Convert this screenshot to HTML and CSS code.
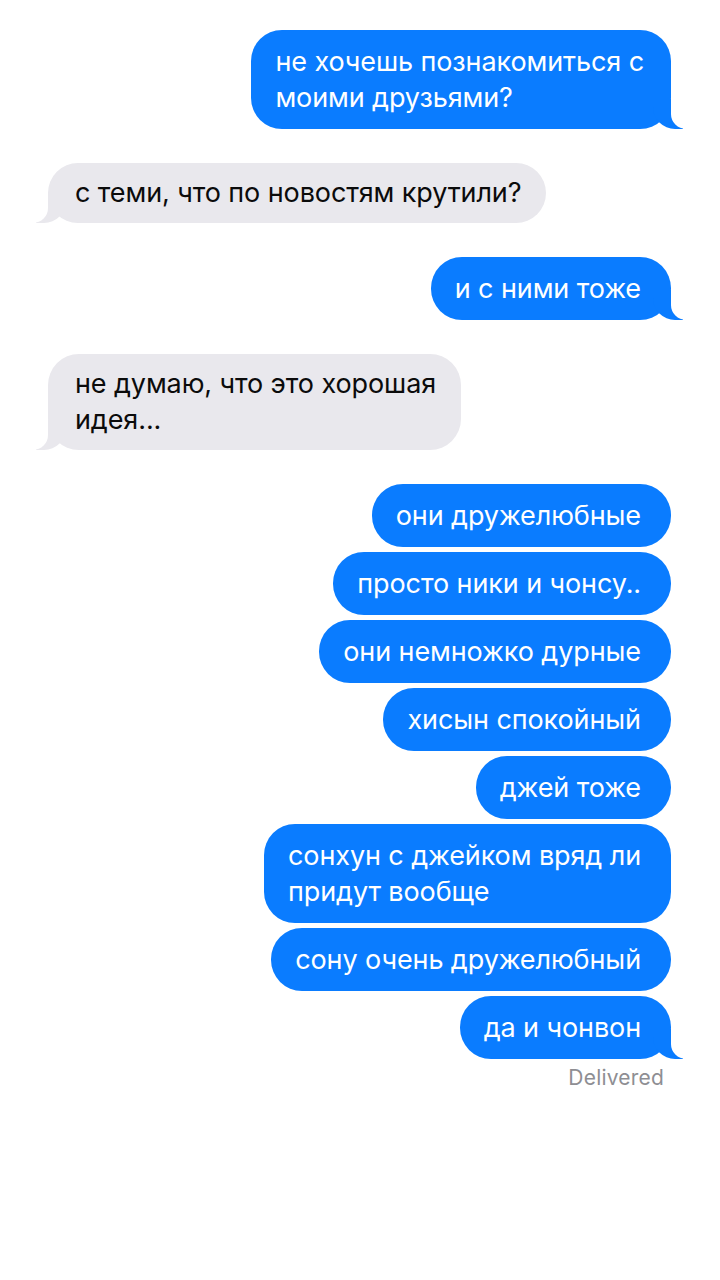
FILE: index.html
```html
<!DOCTYPE html>
<html lang="ru">
<head>
<meta charset="utf-8">
<link rel="stylesheet" href="styles.css">
</head>
<body>
<main class="chat">
  <div class="row sent"><div class="bubble sent tail first">не хочешь познакомиться с<br>моими друзьями?</div></div>
  <div class="row recv"><div class="bubble recv tail">с теми, что по новостям крутили?</div></div>
  <div class="row sent"><div class="bubble sent tail">и с ними тоже</div></div>
  <div class="row recv"><div class="bubble recv tail">не думаю, что это хорошая<br>идея...</div></div>
  <div class="group">
    <div class="row sent"><div class="bubble sent">они дружелюбные</div></div>
    <div class="row sent"><div class="bubble sent">просто ники и чонсу..</div></div>
    <div class="row sent"><div class="bubble sent">они немножко дурные</div></div>
    <div class="row sent"><div class="bubble sent">хисын спокойный</div></div>
    <div class="row sent"><div class="bubble sent">джей тоже</div></div>
    <div class="row sent"><div class="bubble sent">сонхун с джейком вряд ли<br>придут вообще</div></div>
    <div class="row sent"><div class="bubble sent">сону очень дружелюбный</div></div>
    <div class="row sent"><div class="bubble sent tail">да и чонвон</div></div>
  </div>
  <div class="status">Delivered</div>
</main>
</body>
</html>
```
FILE: styles.css
```css
html, body {
  margin: 0;
  padding: 0;
  background: #ffffff;
}
body {
  width: 720px;
  height: 1280px;
  font-family: "Inter", "Liberation Sans", sans-serif;
  -webkit-font-smoothing: antialiased;
}
.chat {
  display: flex;
  flex-direction: column;
  padding: 30px 49px 0 48px;
  gap: 34px;
}
.group {
  display: flex;
  flex-direction: column;
  gap: 5px;
}
.row {
  display: flex;
}
.row.sent { justify-content: flex-end; }
.row.recv { justify-content: flex-start; }
.bubble {
  position: relative;
  font-size: 27px;
  line-height: 36px;
  padding: 13.5px 30px 13.5px 24px;
  border-radius: 31px;
  letter-spacing: -0.1px;
}
.bubble.sent {
  background: #0a7cff;
  color: #ffffff;
}
.bubble.sent.first { padding-right: 27px; }
.bubble.recv {
  background: #e9e8ed;
  color: #0b0b0b;
  padding: 12px 25px 12px 27px;
}
.bubble.sent.tail::before {
  content: "";
  position: absolute;
  right: -12px;
  bottom: 0;
  width: 30px;
  height: 30px;
  background: #0a7cff;
  border-bottom-left-radius: 22px;
}
.bubble.sent.tail::after {
  content: "";
  position: absolute;
  right: -15px;
  bottom: 0;
  width: 15px;
  height: 30px;
  background: #ffffff;
  border-bottom-left-radius: 15px;
}
.bubble.recv.tail::before {
  content: "";
  position: absolute;
  left: -12px;
  bottom: 0;
  width: 30px;
  height: 30px;
  background: #e9e8ed;
  border-bottom-right-radius: 22px;
}
.bubble.recv.tail::after {
  content: "";
  position: absolute;
  left: -15px;
  bottom: 0;
  width: 15px;
  height: 30px;
  background: #ffffff;
  border-bottom-right-radius: 15px;
}
.status {
  align-self: flex-end;
  margin-top: -27px;
  margin-right: 7px;
  font-size: 21px;
  line-height: 24px;
  color: #8e8e93;
  letter-spacing: 0.2px;
}
```
